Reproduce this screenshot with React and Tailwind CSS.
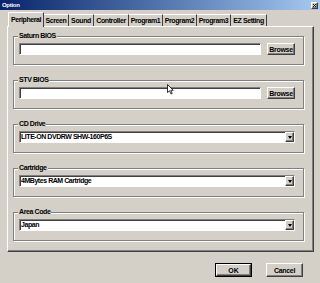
import React from "react";

const raised =
  "border border-t-white border-l-white border-r-[#404040] border-b-[#404040] shadow-[inset_-1px_-1px_0_#808080]";
const sunken =
  "border border-t-[#808080] border-l-[#808080] border-r-white border-b-white shadow-[inset_1px_1px_0_#404040]";

function Group({ label, children }) {
  return (
    <fieldset className="border border-[#808080] shadow-[inset_1px_1px_0_#fff,1px_1px_0_#fff] pl-[5px] pr-[8px] pt-[3px] pb-[9px] min-w-0">
      <legend className="ml-[-1px] px-[1px] bg-[#d4d0c8] text-[7px] leading-[8px] font-bold tracking-[-0.4px]">
        {label}
      </legend>
      {children}
    </fieldset>
  );
}

function PathRow() {
  return (
    <div className="flex items-center gap-[6px]">
      <div className={`flex-1 h-[12px] bg-white ${sunken}`} />
      <div
        className={`w-[28px] h-[12px] flex items-center justify-center text-[7px] leading-[7px] font-bold tracking-[-0.3px] ${raised}`}
      >
        Browse
      </div>
    </div>
  );
}

function Select({ value }) {
  return (
    <div className={`h-[12px] bg-white flex items-center ${sunken}`}>
      <span className="flex-1 pl-[1px] text-[7px] leading-[8px] font-bold tracking-[-0.45px] whitespace-nowrap overflow-hidden">
        {value}
      </span>
      <div className={`w-[9px] h-full bg-[#d4d0c8] flex items-center justify-center ${raised}`}>
        <svg width="4" height="3" viewBox="0 0 4 3">
          <path d="M0 0H4L2 3Z" fill="#000" />
        </svg>
      </div>
    </div>
  );
}

const tabs = [
  ["Peripheral", "w-[36px]"],
  ["Screen", "w-[25px]"],
  ["Sound", "w-[25px]"],
  ["Controller", "w-[35px]"],
  ["Program1", "w-[34px]"],
  ["Program2", "w-[34px]"],
  ["Program3", "w-[34px]"],
  ["EZ Setting", "w-[36px]"],
];

export default function App() {
  return (
    <div className="relative w-[320px] h-[283px] bg-[#d4d0c8] font-['Liberation_Sans',Arial,sans-serif] text-black overflow-hidden flex flex-col">
      {/* title bar */}
      <div className="h-[10px] flex items-center justify-between bg-linear-to-r from-[#0a246a] to-[#a6caf0] pl-[2px] pr-[2px]">
        <span className="text-[6px] leading-[6px] font-bold text-white tracking-[-0.3px]">Option</span>
        <div className={`w-[7px] h-[7px] bg-[#d4d0c8] flex items-center justify-center ${raised}`}>
          <svg width="3" height="3" viewBox="0 0 3 3">
            <path d="M0 0L3 3M3 0L0 3" stroke="#000" strokeWidth="0.9" />
          </svg>
        </div>
      </div>

      {/* tabs */}
      <div className="mt-[2px] pl-[8px] h-[14px] flex items-end">
        {tabs.map(([t, w], i) =>
          i === 0 ? (
            <div
              key={t}
              className={`relative z-10 ${w} h-[15px] -mb-[1px] bg-[#d4d0c8] border-t border-l border-r border-t-white border-l-white border-r-[#404040] flex items-start justify-center pt-[3px] text-[7px] leading-[8px] font-bold tracking-[-0.4px] whitespace-nowrap`}
            >
              {t}
            </div>
          ) : (
            <div
              key={t}
              className={`${w} h-[12px] border-t border-r border-t-white border-r-[#404040] flex items-start justify-center pt-[2px] text-[7px] leading-[8px] font-bold tracking-[-0.4px] whitespace-nowrap`}
            >
              {t}
            </div>
          )
        )}
      </div>

      {/* panel */}
      <div className="ml-[7px] w-[307px] h-[226px] border border-t-white border-l-white border-r-[#404040] border-b-[#404040] shadow-[inset_-1px_-1px_0_#808080] pl-[5px] pr-[9px] pt-[5px] flex flex-col gap-[11px]">
        <Group label="Saturn BIOS">
          <PathRow />
        </Group>
        <Group label="STV BIOS">
          <PathRow />
        </Group>
        <Group label="CD Drive">
          <Select value="LITE-ON DVDRW SHW-160P6S" />
        </Group>
        <Group label="Cartridge">
          <Select value="4MBytes RAM Cartridge" />
        </Group>
        <Group label="Area Code">
          <Select value="Japan" />
        </Group>
      </div>

      {/* buttons */}
      <div className="mt-[11px] flex justify-end gap-[14px] pr-[17px]">
        <div className="w-[37px] h-[14px] border border-black">
          <div className={`w-full h-full flex items-center justify-center text-[7px] leading-[7px] font-bold ${raised}`}>
            OK
          </div>
        </div>
        <div
          className={`w-[37px] h-[14px] flex items-center justify-center text-[7px] leading-[7px] font-bold tracking-[-0.3px] ${raised}`}
        >
          Cancel
        </div>
      </div>

      {/* mouse pointer */}
      <svg className="absolute left-[167px] top-[84px]" width="7" height="11" viewBox="0 0 7 11">
        <path d="M0.5 0.5V8.5L2.5 6.8L4 10L5.2 9.4L3.8 6.3H6.3Z" fill="#fff" stroke="#000" strokeWidth="0.8" />
      </svg>
    </div>
  );
}
